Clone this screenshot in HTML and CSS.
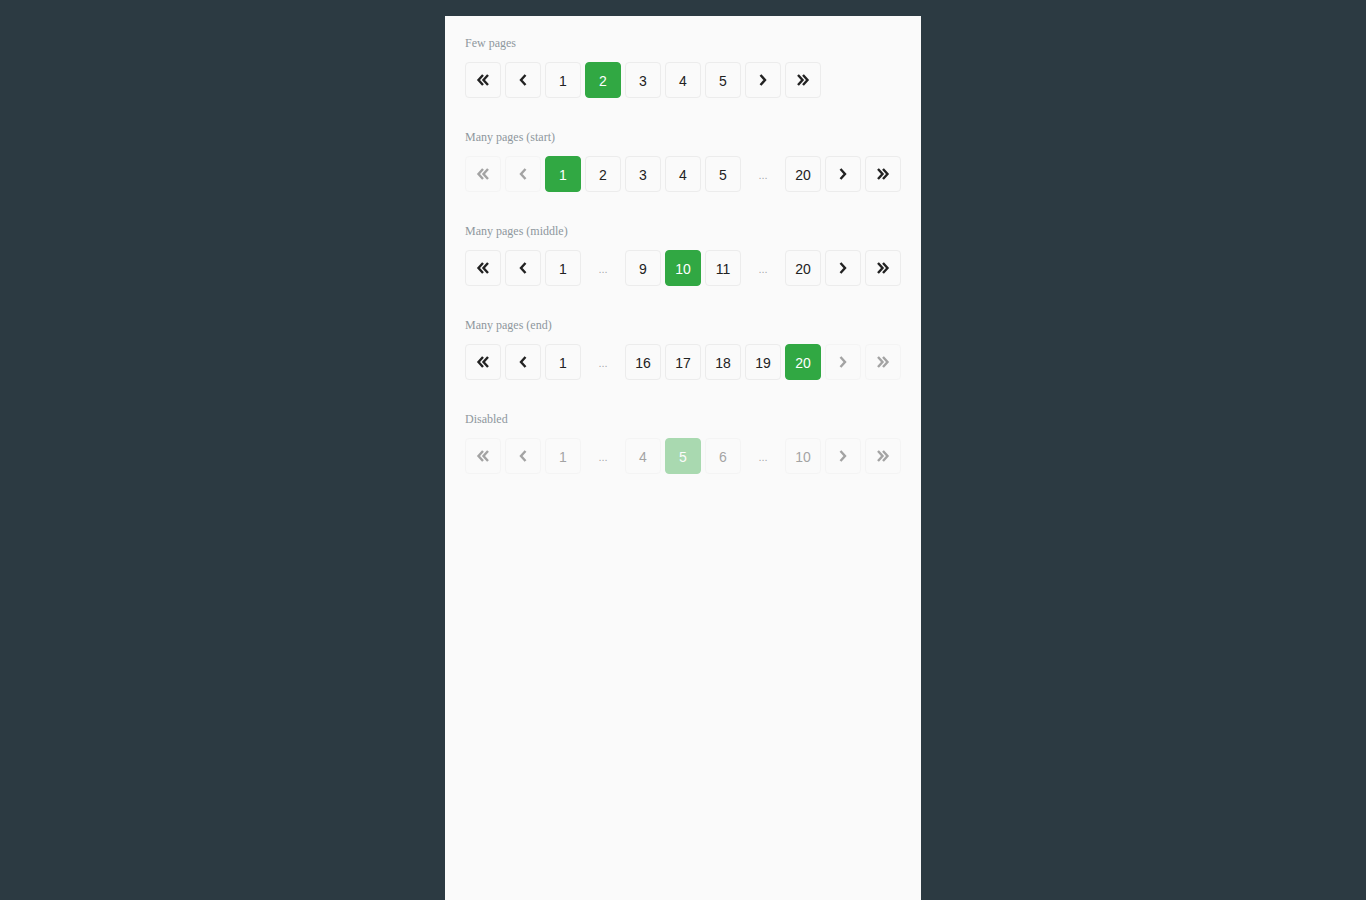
FILE: index.html
```html
<!DOCTYPE html>
<html lang="en">
<head>
  <meta charset="UTF-8">
  <title>Pagination</title>
  <link rel="stylesheet" href="styles.css">
</head>
<body>
  <div class="panel">
    <div class="section">
      <p class="label">Few pages</p>
      <div class="pager">
        <button class="pg"><svg viewBox="0 0 16 16"><path d="M8 3 3.5 8 8 13M13 3 8.5 8 13 13"/></svg></button>
        <button class="pg"><svg viewBox="0 0 16 16"><path d="M10.5 3 6 8l4.5 5"/></svg></button>
        <button class="pg">1</button>
        <button class="pg active">2</button>
        <button class="pg">3</button>
        <button class="pg">4</button>
        <button class="pg">5</button>
        <button class="pg"><svg viewBox="0 0 16 16"><path d="M5.5 3 10 8l-4.5 5"/></svg></button>
        <button class="pg"><svg viewBox="0 0 16 16"><path d="M3 3l4.5 5L3 13M8 3l4.5 5L8 13"/></svg></button>
      </div>
    </div>

    <div class="section">
      <p class="label">Many pages (start)</p>
      <div class="pager">
        <button class="pg" disabled><svg viewBox="0 0 16 16"><path d="M8 3 3.5 8 8 13M13 3 8.5 8 13 13"/></svg></button>
        <button class="pg" disabled><svg viewBox="0 0 16 16"><path d="M10.5 3 6 8l4.5 5"/></svg></button>
        <button class="pg active">1</button>
        <button class="pg">2</button>
        <button class="pg">3</button>
        <button class="pg">4</button>
        <button class="pg">5</button>
        <span class="dots">...</span>
        <button class="pg">20</button>
        <button class="pg"><svg viewBox="0 0 16 16"><path d="M5.5 3 10 8l-4.5 5"/></svg></button>
        <button class="pg"><svg viewBox="0 0 16 16"><path d="M3 3l4.5 5L3 13M8 3l4.5 5L8 13"/></svg></button>
      </div>
    </div>

    <div class="section">
      <p class="label">Many pages (middle)</p>
      <div class="pager">
        <button class="pg"><svg viewBox="0 0 16 16"><path d="M8 3 3.5 8 8 13M13 3 8.5 8 13 13"/></svg></button>
        <button class="pg"><svg viewBox="0 0 16 16"><path d="M10.5 3 6 8l4.5 5"/></svg></button>
        <button class="pg">1</button>
        <span class="dots">...</span>
        <button class="pg">9</button>
        <button class="pg active">10</button>
        <button class="pg">11</button>
        <span class="dots">...</span>
        <button class="pg">20</button>
        <button class="pg"><svg viewBox="0 0 16 16"><path d="M5.5 3 10 8l-4.5 5"/></svg></button>
        <button class="pg"><svg viewBox="0 0 16 16"><path d="M3 3l4.5 5L3 13M8 3l4.5 5L8 13"/></svg></button>
      </div>
    </div>

    <div class="section">
      <p class="label">Many pages (end)</p>
      <div class="pager">
        <button class="pg"><svg viewBox="0 0 16 16"><path d="M8 3 3.5 8 8 13M13 3 8.5 8 13 13"/></svg></button>
        <button class="pg"><svg viewBox="0 0 16 16"><path d="M10.5 3 6 8l4.5 5"/></svg></button>
        <button class="pg">1</button>
        <span class="dots">...</span>
        <button class="pg">16</button>
        <button class="pg">17</button>
        <button class="pg">18</button>
        <button class="pg">19</button>
        <button class="pg active">20</button>
        <button class="pg" disabled><svg viewBox="0 0 16 16"><path d="M5.5 3 10 8l-4.5 5"/></svg></button>
        <button class="pg" disabled><svg viewBox="0 0 16 16"><path d="M3 3l4.5 5L3 13M8 3l4.5 5L8 13"/></svg></button>
      </div>
    </div>

    <div class="section">
      <p class="label">Disabled</p>
      <div class="pager">
        <button class="pg" disabled><svg viewBox="0 0 16 16"><path d="M8 3 3.5 8 8 13M13 3 8.5 8 13 13"/></svg></button>
        <button class="pg" disabled><svg viewBox="0 0 16 16"><path d="M10.5 3 6 8l4.5 5"/></svg></button>
        <button class="pg" disabled>1</button>
        <span class="dots">...</span>
        <button class="pg" disabled>4</button>
        <button class="pg active" disabled>5</button>
        <button class="pg" disabled>6</button>
        <span class="dots">...</span>
        <button class="pg" disabled>10</button>
        <button class="pg" disabled><svg viewBox="0 0 16 16"><path d="M5.5 3 10 8l-4.5 5"/></svg></button>
        <button class="pg" disabled><svg viewBox="0 0 16 16"><path d="M3 3l4.5 5L3 13M8 3l4.5 5L8 13"/></svg></button>
      </div>
    </div>
  </div>
</body>
</html>
```

FILE: styles.css
```css
html, body {
  height: 100%;
}
body {
  margin: 0;
  background-color: #2c3a42;
  font-family: "Liberation Serif", serif;
}
.panel {
  box-sizing: border-box;
  width: 476px;
  min-height: calc(100% - 16px);
  margin: 16px auto 0;
  padding: 20px;
  background-color: #fafafa;
}
.section {
  margin-bottom: 32px;
}
.label {
  margin: 0 0 12px;
  font-size: 12px;
  line-height: 14px;
  color: #8e979d;
}
.pager {
  display: flex;
  gap: 4px;
}
.pg {
  display: flex;
  align-items: center;
  justify-content: center;
  width: 36px;
  height: 36px;
  padding: 1px 0 0;
  border: 1px solid #ececec;
  border-radius: 4px;
  background-color: #fafafa;
  color: #222;
  font-family: "Liberation Sans", Arial, sans-serif;
  font-size: 14px;
  cursor: pointer;
}
.pg svg {
  width: 16px;
  height: 16px;
  margin-top: -1px;
  fill: none;
  stroke: currentColor;
  stroke-width: 2.4;
  stroke-linecap: butt;
  stroke-linejoin: miter;
}
.pg.active {
  background-color: #31a843;
  border-color: #31a843;
  color: #fff;
}
.pg:disabled {
  opacity: 0.4;
  cursor: default;
}
.dots {
  display: flex;
  align-items: center;
  justify-content: center;
  width: 36px;
  height: 36px;
  padding-top: 2px;
  box-sizing: border-box;
  color: #a6a9ab;
  font-family: "Liberation Sans", Arial, sans-serif;
  font-size: 11px;
}
```
